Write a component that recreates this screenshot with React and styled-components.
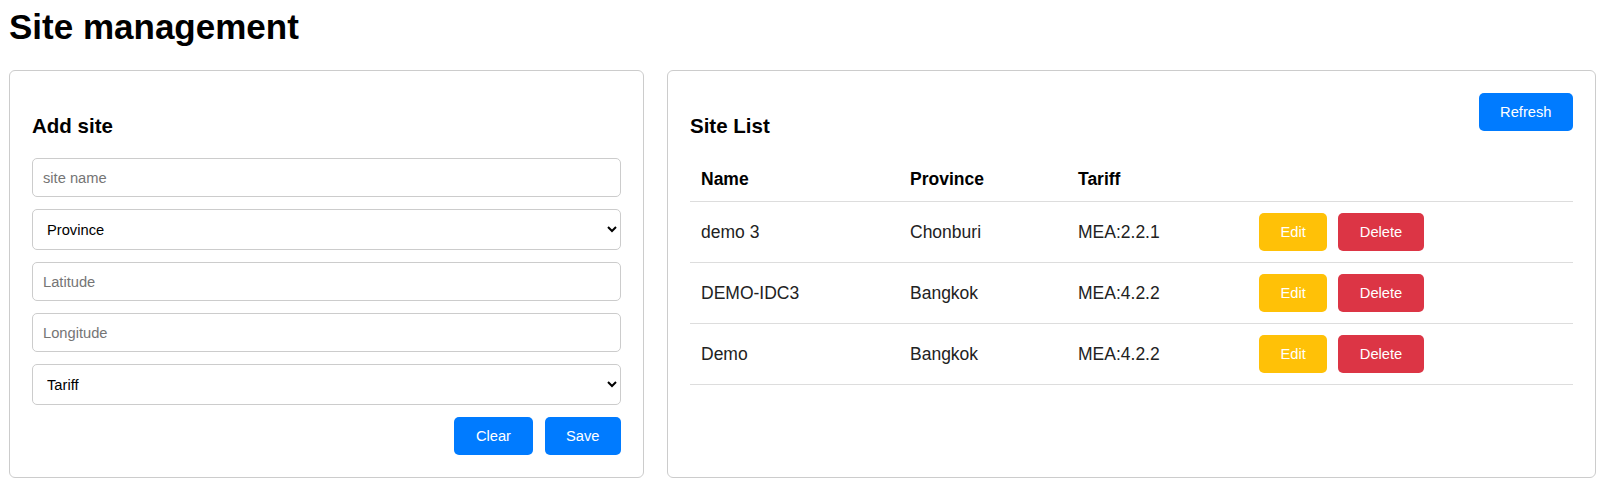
import React from "react";
import styled, { createGlobalStyle } from "styled-components";

const GlobalStyle = createGlobalStyle`
  html, body {
    margin: 0;
    padding: 0;
    background: #ffffff;
    font-family: "Liberation Sans", Arial, sans-serif;
    color: #000;
  }
  * { box-sizing: border-box; }
`;

const Page = styled.div`
  padding: 7px 11px 0 9px;
`;

const Title = styled.h1`
  margin: 0 0 23px 0;
  font-size: 35px;
  line-height: 40px;
  font-weight: 700;
`;

const Columns = styled.div`
  display: grid;
  grid-template-columns: 635px 1fr;
  gap: 23px;
  align-items: stretch;
`;

const Card = styled.section`
  border: 1px solid #cccccc;
  border-radius: 6px;
  padding: 22px;
  height: 408px;
  background: #fff;
`;

const CardTitle = styled.h3`
  margin: 21px 0 20px 0;
  font-size: 20.5px;
  line-height: 24px;
  font-weight: 700;
`;

const Form = styled.div`
  display: flex;
  flex-direction: column;
  gap: 12px;
`;

const TextInput = styled.input`
  width: 100%;
  height: 39px;
  padding: 0 10px;
  border: 1px solid #cccccc;
  border-radius: 5px;
  font-family: "Liberation Sans", Arial, sans-serif;
  font-size: 14.7px;
  color: #000;
  background: #fff;
  outline: none;
  &::placeholder {
    color: #757575;
  }
`;

const Select = styled.select`
  width: 100%;
  height: 41px;
  padding: 0 10px;
  border: 1px solid #cccccc;
  border-radius: 5px;
  font-family: "Liberation Sans", Arial, sans-serif;
  font-size: 14.7px;
  color: #000;
  background: #fff;
  outline: none;
`;

const Actions = styled.div`
  display: flex;
  justify-content: flex-end;
  gap: 12px;
`;

const colors = {
  primary: "#007bff",
  warning: "#ffc107",
  danger: "#dc3545",
};

const Button = styled.button`
  height: 38px;
  padding: 0 21.5px;
  border: none;
  border-radius: 5px;
  background: ${(p) => colors[p.$variant || "primary"]};
  color: #ffffff;
  font-family: "Liberation Sans", Arial, sans-serif;
  font-size: 14.7px;
  cursor: pointer;
  white-space: nowrap;
`;

const ListHeader = styled.div`
  display: flex;
  justify-content: space-between;
  align-items: flex-start;
`;

const Table = styled.table`
  width: 100%;
  border-collapse: collapse;
  table-layout: fixed;
  font-size: 17.5px;
`;

const Th = styled.th`
  text-align: left;
  font-weight: 700;
  padding: 11px 11px 12px 11px;
  line-height: 20px;
  border-bottom: 1px solid #dddddd;
  width: ${(p) => p.$w || "auto"};
`;

const Td = styled.td`
  padding: 11px;
  line-height: 20px;
  color: #222;
  border-bottom: 1px solid #dddddd;
  vertical-align: middle;
`;

const RowActions = styled.div`
  display: flex;
  gap: 11px;
`;

const sites = [
  { name: "demo 3", province: "Chonburi", tariff: "MEA:2.2.1" },
  { name: "DEMO-IDC3", province: "Bangkok", tariff: "MEA:4.2.2" },
  { name: "Demo", province: "Bangkok", tariff: "MEA:4.2.2" },
];

export default function App() {
  return (
    <Page>
      <GlobalStyle />
      <Title>Site management</Title>
      <Columns>
        <Card>
          <CardTitle>Add site</CardTitle>
          <Form>
            <TextInput placeholder="site name" />
            <Select defaultValue="">
              <option value="">Province</option>
            </Select>
            <TextInput placeholder="Latitude" />
            <TextInput placeholder="Longitude" />
            <Select defaultValue="">
              <option value="">Tariff</option>
            </Select>
            <Actions>
              <Button>Clear</Button>
              <Button>Save</Button>
            </Actions>
          </Form>
        </Card>
        <Card>
          <ListHeader>
            <CardTitle>Site List</CardTitle>
            <Button>Refresh</Button>
          </ListHeader>
          <Table>
            <thead>
              <tr>
                <Th $w="209px">Name</Th>
                <Th $w="168px">Province</Th>
                <Th $w="181px">Tariff</Th>
                <Th />
              </tr>
            </thead>
            <tbody>
              {sites.map((s) => (
                <tr key={s.name}>
                  <Td>{s.name}</Td>
                  <Td>{s.province}</Td>
                  <Td>{s.tariff}</Td>
                  <Td>
                    <RowActions>
                      <Button $variant="warning">Edit</Button>
                      <Button $variant="danger">Delete</Button>
                    </RowActions>
                  </Td>
                </tr>
              ))}
            </tbody>
          </Table>
        </Card>
      </Columns>
    </Page>
  );
}
